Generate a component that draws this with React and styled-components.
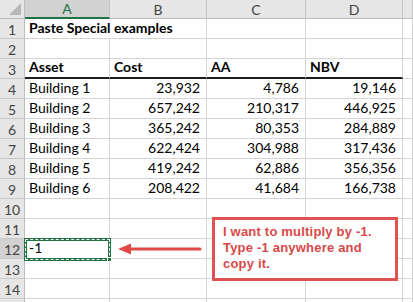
import React from "react";
import styled, { createGlobalStyle } from "styled-components";

const Global = createGlobalStyle`
  html, body { margin: 0; padding: 0; background: #fff; overflow: hidden; }
  body { font-family: Lato, "Liberation Sans", sans-serif; }
`;

const Wrap = styled.div`
  position: relative;
  width: 413px;
  height: 302px;
  overflow: hidden;
`;

const Sheet = styled.div`
  display: grid;
  grid-template-columns: 25px 85px 97px 99px 97px 1fr;
  grid-template-rows: 19px;
  grid-auto-rows: 20px;
  font-family: Lato, "Liberation Sans", sans-serif;
  font-size: 14px;
  color: #000;
`;

const Corner = styled.div`
  position: relative;
  background: #e6e6e6;
  border-right: 1px solid #bdbdbd;
  border-bottom: 1px solid #bdbdbd;
  box-sizing: border-box;
  &::after {
    content: "";
    position: absolute;
    right: 3px;
    bottom: 3px;
    width: 0;
    height: 0;
    border-left: 12px solid transparent;
    border-bottom: 12px solid #b7b7b7;
  }
`;

const ColHead = styled.div`
  display: flex;
  align-items: center;
  justify-content: center;
  box-sizing: border-box;
  background: ${(p) => (p.$active ? "#d2d2d2" : "#e6e6e6")};
  color: ${(p) => (p.$active ? "#217346" : "#444")};
  border-right: 1px solid #c4c4c4;
  border-bottom: ${(p) => (p.$active ? "2px solid #217346" : "1px solid #bdbdbd")};
  font-size: 14px;
`;

const RowHead = styled.div`
  display: flex;
  align-items: center;
  justify-content: center;
  box-sizing: border-box;
  background: ${(p) => (p.$active ? "#d2d2d2" : "#e6e6e6")};
  color: #444;
  border-right: 1px solid #bdbdbd;
  border-bottom: 1px solid #c9c9c9;
  font-size: 14px;
  padding-top: 1px;
`;

const Cell = styled.div`
  display: flex;
  align-items: flex-end;
  justify-content: ${(p) => (p.$right ? "flex-end" : "flex-start")};
  box-sizing: border-box;
  padding: 0 ${(p) => (p.$right ? "6px" : "0")} 2px ${(p) => (p.$right ? "0" : "4px")};
  border-right: 1px solid #d4d4d4;
  border-bottom: ${(p) => (p.$thick ? "2px solid #1c1c1c" : "1px solid #d4d4d4")};
  font-weight: ${(p) => (p.$bold ? 700 : 400)};
  white-space: nowrap;
  overflow: visible;
  grid-column: ${(p) => (p.$span ? `span ${p.$span}` : "auto")};
  line-height: 16px;
`;

const Selection = styled.div`
  position: absolute;
  left: 24px;
  top: 238px;
  width: 87px;
  height: 23px;
  box-sizing: border-box;
  border: 3px solid #217346;
  &::before {
    content: "";
    position: absolute;
    inset: -2px;
    border: 1px dashed #fff;
  }
  &::after {
    content: "";
    position: absolute;
    right: -4px;
    bottom: -4px;
    width: 5px;
    height: 5px;
    background: #217346;
    border: 1px solid #fff;
    box-sizing: border-box;
  }
`;

const Arrow = styled.svg`
  position: absolute;
  left: 116px;
  top: 242px;
`;

const Callout = styled.div`
  position: absolute;
  left: 212px;
  top: 217px;
  width: 186px;
  height: 64px;
  box-sizing: border-box;
  border: 3px solid #e05252;
  background: #fff;
  padding: 4px 0 0 8px;
  color: #d84848;
  font-family: "Liberation Sans", Arial, sans-serif;
  font-weight: 700;
  font-size: 13px;
  line-height: 16px;
  letter-spacing: 0.2px;
  white-space: nowrap;
`;

const cols = ["A", "B", "C", "D", ""];

const data = [
  [{ t: "Paste Special examples", bold: true, span: 2 }, null, "", "", ""],
  ["", "", "", "", ""],
  [
    { t: "Asset", bold: true, thick: true },
    { t: "Cost", bold: true, thick: true },
    { t: "AA", bold: true, thick: true },
    { t: "NBV", bold: true, thick: true },
    "",
  ],
  ["Building 1", "23,932", "4,786", "19,146", ""],
  ["Building 2", "657,242", "210,317", "446,925", ""],
  ["Building 3", "365,242", "80,353", "284,889", ""],
  ["Building 4", "622,424", "304,988", "317,436", ""],
  ["Building 5", "419,242", "62,886", "356,356", ""],
  ["Building 6", "208,422", "41,684", "166,738", ""],
  ["", "", "", "", ""],
  ["", "", "", "", ""],
  ["-1", "", "", "", ""],
  ["", "", "", "", ""],
  ["", "", "", "", ""],
  ["", "", "", "", ""],
];

export default function App() {
  return (
    <Wrap>
      <Global />
      <Sheet>
        <Corner />
        {cols.map((c, i) => (
          <ColHead key={i} $active={c === "A"}>
            {c}
          </ColHead>
        ))}
        {data.map((row, ri) => (
          <React.Fragment key={ri}>
            <RowHead $active={ri === 11}>{ri < 14 ? ri + 1 : ""}</RowHead>
            {row.map((v, ci) => {
              if (v === null) return null;
              const o = typeof v === "string" ? { t: v } : v;
              const right = ci >= 1 && ci <= 3 && /^[\d,]+$/.test(o.t);
              return (
                <Cell
                  key={ci}
                  $right={right}
                  $bold={o.bold}
                  $thick={o.thick}
                  $span={o.span}
                >
                  {o.t}
                </Cell>
              );
            })}
          </React.Fragment>
        ))}
      </Sheet>
      <Selection />
      <Arrow width="88" height="14" viewBox="0 0 88 14">
        <line x1="12" y1="7" x2="84" y2="7" stroke="#e04848" strokeWidth="3.2" strokeLinecap="round" />
        <polygon points="2,7 15,1.5 15,12.5" fill="#e04848" />
      </Arrow>
      <Callout>
        I want to multiply by -1.
        <br />
        Type -1 anywhere and
        <br />
        copy it.
      </Callout>
    </Wrap>
  );
}
